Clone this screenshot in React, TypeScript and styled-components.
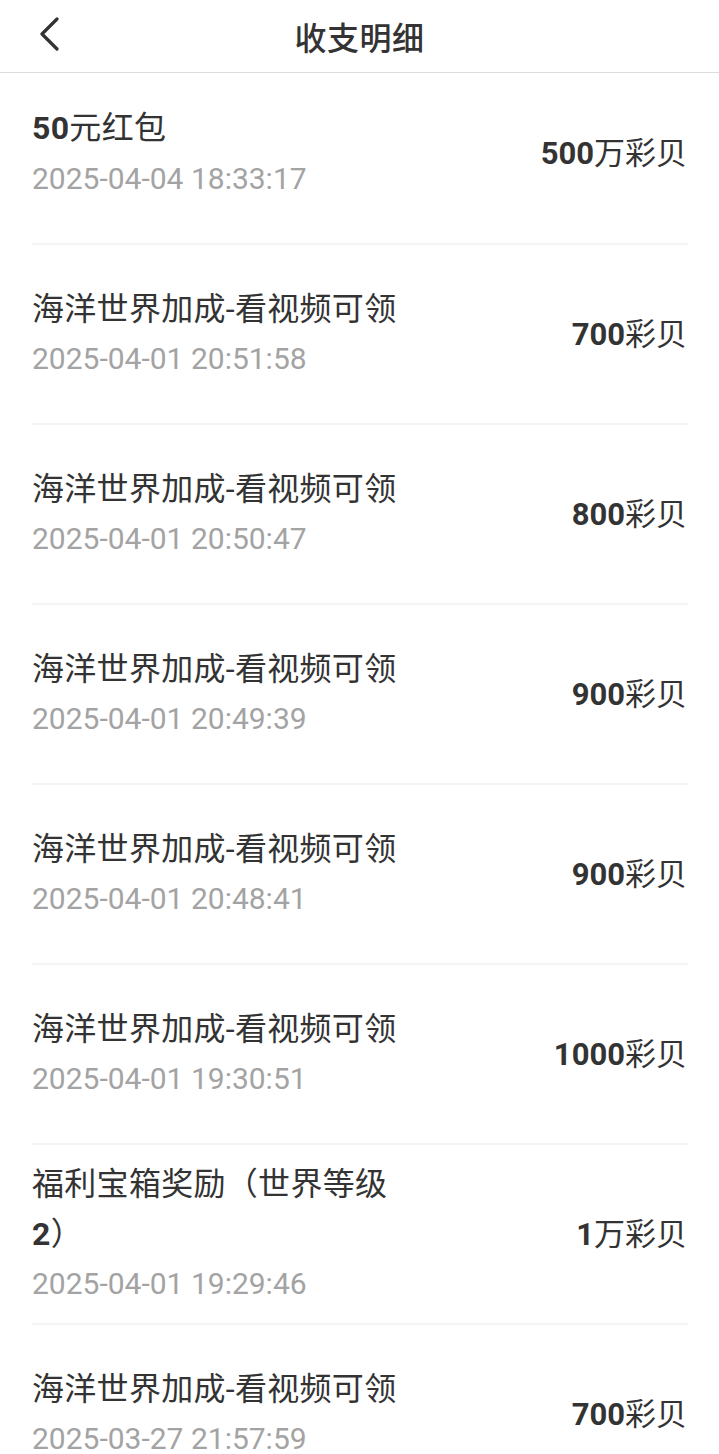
import React from 'react'
import styled, { createGlobalStyle } from 'styled-components'

const GlobalStyle = createGlobalStyle`
  body {
    margin: 0;
    background: #fff;
    font-family: Roboto, "Noto Sans CJK SC", sans-serif;
  }
`

interface Record {
  title: string
  time: string
  num: string
  unit: string
}

const records: Record[] = [
  { title: '50元红包', time: '2025-04-04 18:33:17', num: '500', unit: '万彩贝' },
  { title: '海洋世界加成-看视频可领', time: '2025-04-01 20:51:58', num: '700', unit: '彩贝' },
  { title: '海洋世界加成-看视频可领', time: '2025-04-01 20:50:47', num: '800', unit: '彩贝' },
  { title: '海洋世界加成-看视频可领', time: '2025-04-01 20:49:39', num: '900', unit: '彩贝' },
  { title: '海洋世界加成-看视频可领', time: '2025-04-01 20:48:41', num: '900', unit: '彩贝' },
  { title: '海洋世界加成-看视频可领', time: '2025-04-01 19:30:51', num: '1000', unit: '彩贝' },
  { title: '福利宝箱奖励（世界等级2）', time: '2025-04-01 19:29:46', num: '1', unit: '万彩贝' },
  { title: '海洋世界加成-看视频可领', time: '2025-03-27 21:57:59', num: '700', unit: '彩贝' },
]

const Page = styled.div`
  width: 719px;
  height: 1454px;
  overflow: hidden;
  background: #fff;
`

const Header = styled.header`
  height: 72px;
  border-bottom: 1px solid #dcdcdc;
  display: flex;
  align-items: center;
  justify-content: center;
  position: relative;
`

const BackButton = styled.button`
  position: absolute;
  left: 30px;
  top: 14px;
  width: 40px;
  height: 40px;
  padding: 0;
  border: none;
  background: none;
  display: flex;
  align-items: center;
  justify-content: center;
`

const Title = styled.h1`
  margin: 0;
  font-size: 32px;
  font-weight: 500;
  color: #333;
  letter-spacing: 0.5px;
`

const List = styled.ul`
  list-style: none;
  margin: 0;
  padding: 0 31px 0 32px;
`

const Row = styled.li<{ $first?: boolean }>`
  height: ${(p) => (p.$first ? 172 : 180)}px;
  box-sizing: border-box;
  padding-bottom: ${(p) => (p.$first ? 10 : 0)}px;
  border-bottom: 2px solid #f4f4f4;
  display: flex;
  align-items: center;
  justify-content: space-between;
`

const Info = styled.div`
  display: flex;
  flex-direction: column;
  max-width: 388px;
`

const ItemTitle = styled.div<{ $first?: boolean }>`
  font-size: 32px;
  line-height: ${(p) => (p.$first ? 52 : 50)}px;
  color: #333;
  letter-spacing: 0.3px;
`

const Num = styled.span`
  font-weight: 700;
`

const Time = styled.div`
  font-size: 30px;
  line-height: 50px;
  color: #a3a3a3;
`

const Amount = styled.div`
  font-size: 31px;
  color: #333;
  white-space: nowrap;
  margin-right: 1px;
  padding-bottom: 6px;
`

const AmountNum = styled.span`
  font-weight: 700;
`

const withBoldDigits = (text: string) =>
  text.split(/(\d+)/).map((part, i) =>
    /^\d+$/.test(part) ? <Num key={i}>{part}</Num> : <React.Fragment key={i}>{part}</React.Fragment>
  )

export default function App() {
  return (
    <Page>
      <GlobalStyle />
      <Header>
        <BackButton aria-label="返回">
          <svg width="24" height="34" viewBox="0 0 24 34" fill="none">
            <path d="M19 2 L4 17 L19 32" stroke="#333" strokeWidth="3.2" strokeLinecap="round" strokeLinejoin="round" />
          </svg>
        </BackButton>
        <Title>收支明细</Title>
      </Header>
      <List>
        {records.map((r, i) => (
          <Row key={i} $first={i === 0}>
            <Info>
              <ItemTitle $first={i === 0}>{withBoldDigits(r.title)}</ItemTitle>
              <Time>{r.time}</Time>
            </Info>
            <Amount>
              <AmountNum>{r.num}</AmountNum>
              {r.unit}
            </Amount>
          </Row>
        ))}
      </List>
    </Page>
  )
}
